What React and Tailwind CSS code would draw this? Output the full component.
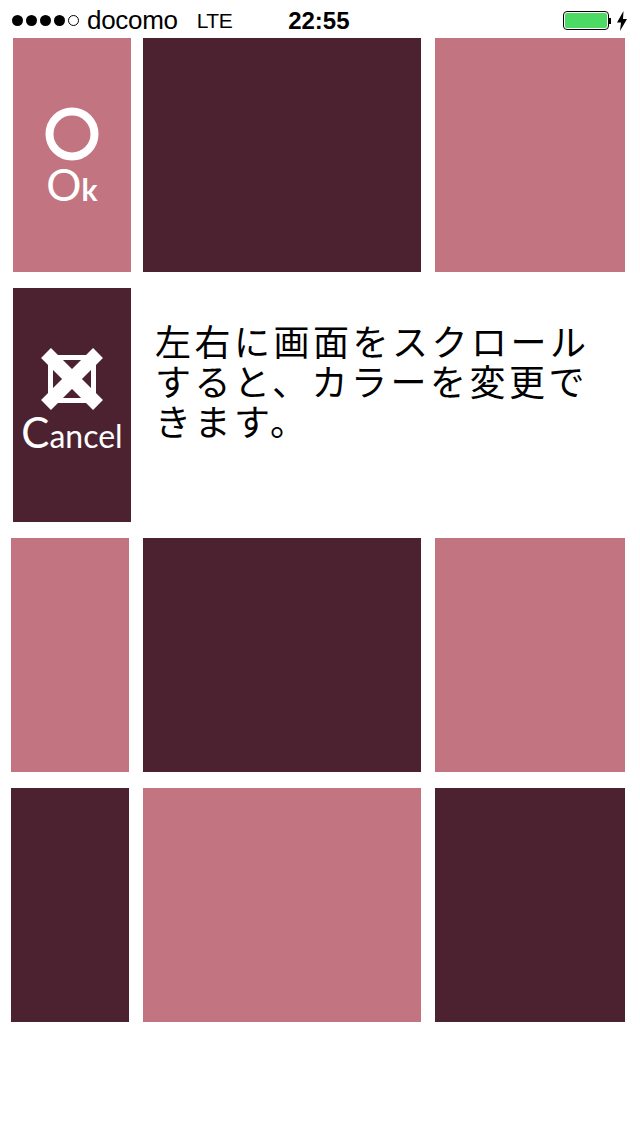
import React from "react";

const P = "bg-[#c27480]";
const D = "bg-[#4c2230]";

function Dot({ on }) {
  return on ? (
    <span className="w-[11px] h-[11px] rounded-full bg-black" />
  ) : (
    <span className="w-[11px] h-[11px] rounded-full border border-black" />
  );
}

function StatusBar() {
  return (
    <div className="h-[38px] flex items-center pt-[3px] pl-[12px] pr-[12px] text-black font-['Liberation_Sans',sans-serif]">
      <div className="flex items-center gap-[3px]">
        <Dot on /><Dot on /><Dot on /><Dot on /><Dot />
      </div>
      <span className="ml-[8px] text-[26px] leading-[35px] tracking-[-0.3px]">docomo</span>
      <span className="ml-[19px] text-[21px] leading-[35px] tracking-[-0.5px]">LTE</span>
      <span className="ml-[56px] text-[24px] leading-[35px] font-bold">22:55</span>
      <div className="ml-auto flex items-center">
        <div className="w-[46px] h-[19px] rounded-[4px] border border-black p-[1px] flex">
          <div className="flex-1 rounded-[2px] bg-[#4cd964]" />
        </div>
        <span className="w-[2px] h-[6px] bg-black" />
        <svg width="12" height="20" viewBox="0 0 12 20" className="ml-[5px]">
          <path d="M7.5 0 L1 11.5 H5 L4 20 L11 8 H7 Z" fill="#000" />
        </svg>
      </div>
    </div>
  );
}

function Row({ first, colors, shift }) {
  return (
    <div className={`flex h-[234px] ${shift ? "pl-[11px]" : "pl-[13px]"}`}>
      <div className={`w-[118px] shrink-0 flex flex-col items-center ${colors[0]}`}>{first}</div>
      <div className={`${shift ? "ml-[14px]" : "ml-[12px]"} w-[278px] shrink-0 ${colors[1]}`} />
      <div className={`ml-[14px] w-[190px] shrink-0 ${colors[2]}`} />
    </div>
  );
}

export default function App() {
  return (
    <div className="w-[640px] h-[1136px] bg-white overflow-hidden">
      <StatusBar />
      <Row
        colors={[P, D, P]}
        first={
          <>
            <svg width="54" height="54" viewBox="0 0 54 54" className="mt-[69px]">
              <circle cx="27" cy="27" r="22.5" fill="none" stroke="#fff" strokeWidth="8" />
            </svg>
            <span className="mt-[1px] text-white text-[44px] leading-[44px] font-['Lato',sans-serif] flex items-baseline">
              O<span className="text-[30px] font-bold">k</span>
            </span>
          </>
        }
      />
      <div className="flex h-[234px] mt-[16px] pl-[13px]">
        <div className={`w-[118px] shrink-0 flex flex-col items-center ${D}`}>
          <svg width="62" height="62" viewBox="0 0 62 62" className="mt-[60px]">
            <rect x="9.5" y="9.5" width="43" height="43" fill="none" stroke="#fff" strokeWidth="5" />
            <path d="M5 5 L57 57 M57 5 L5 57" stroke="#fff" strokeWidth="14" fill="none" />
          </svg>
          <span className="mt-[2px] text-white text-[32px] leading-[40px] font-['Lato',sans-serif] whitespace-nowrap flex items-baseline">
            <span className="text-[42px]">C</span>ancel
          </span>
        </div>
        <p className="ml-[24px] mt-[32px] text-black text-[36px] leading-[40px] tracking-[3.5px] font-['Noto_Sans_CJK_JP',sans-serif] whitespace-nowrap">
          左右に画面をスクロール
          <br />
          すると、カラーを変更で
          <br />
          きます。
        </p>
      </div>
      <div className="mt-[16px]">
        <Row shift colors={[P, D, P]} />
      </div>
      <div className="mt-[16px]">
        <Row shift colors={[D, P, D]} />
      </div>
    </div>
  );
}
